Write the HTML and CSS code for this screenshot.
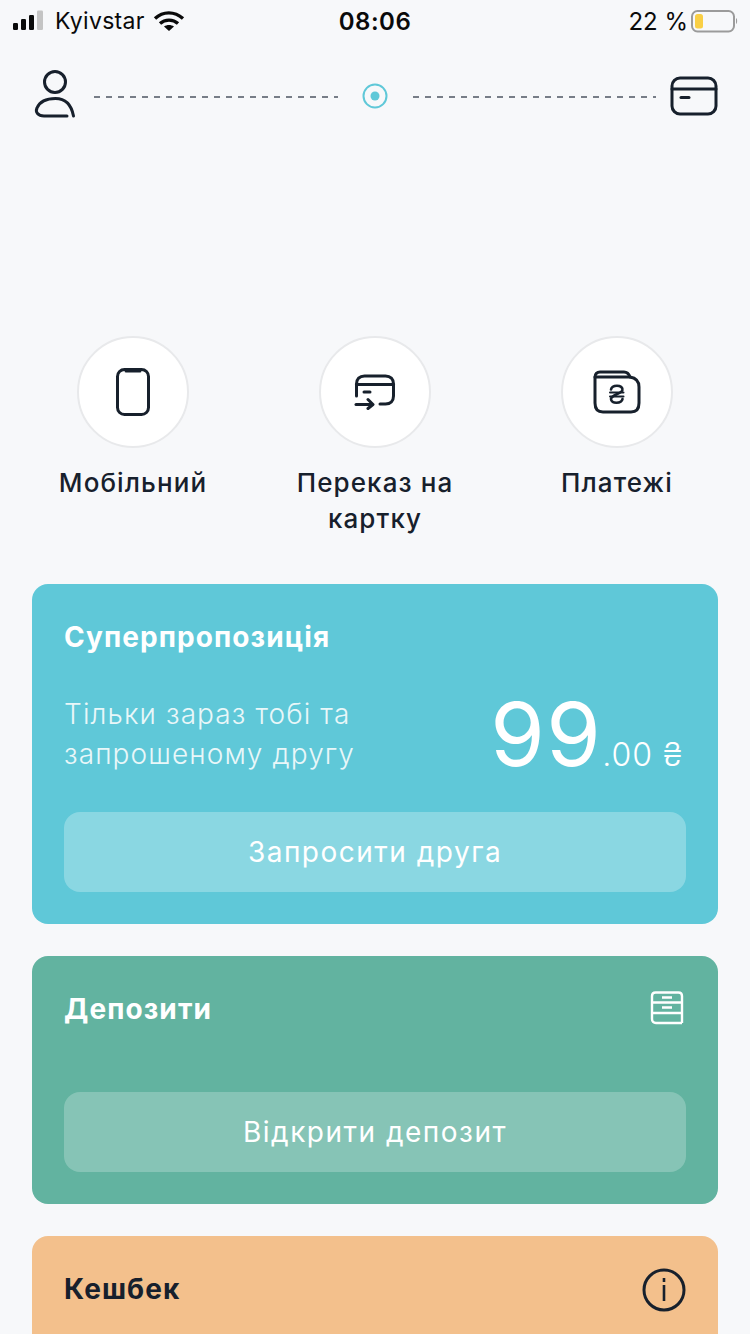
FILE: index.html
```html
<!DOCTYPE html>
<html lang="uk">
<head>
<meta charset="utf-8">
<title>Головна</title>
<link rel="stylesheet" href="styles.css">
</head>
<body>
<div class="page">
  <header class="status">
    <div class="status-left">
      <svg class="signal" width="34" height="24" viewBox="0 0 34 24"><rect x="1" y="14" width="5" height="7" rx="1.2" fill="#0a0a0a"/><rect x="9" y="10" width="5" height="11" rx="1.2" fill="#0a0a0a"/><rect x="17" y="6" width="5" height="15" rx="1.2" fill="#0a0a0a"/><rect x="25" y="1.500" width="6" height="19.500" rx="1.2" fill="#c4c4c4"/></svg>
      <span class="carrier">Kyivstar</span>
      <svg class="wifi" width="32" height="24" viewBox="0 0 32 24" fill="none" stroke="#0a0a0a" stroke-width="3.400"><path d="M2 9.500C10 2 21.500 2 30 9.500"/><path d="M7 14.500C12 10 20 10 25 14.500"/><path d="M16 22l-5-4.500c3-2 7-2 10 0z" fill="#0a0a0a" stroke="none"/></svg>
    </div>
    <div class="clock">08:06</div>
    <div class="status-right">
      <span class="pct">22 %</span>
      <svg width="48" height="26" viewBox="0 0 48 26" fill="none"><rect x="2" y="3" width="42" height="20.500" rx="5.500" stroke="#9b9b9b" stroke-width="2"/><rect x="5" y="6" width="8" height="14.500" rx="2.500" fill="#f9cf45"/><path d="M46 10c1.500.5 1.500 5.500 0 6z" fill="#9b9b9b"/></svg>
    </div>
  </header>

  <nav class="stepper">
    <svg class="step-icon" width="48" height="52" viewBox="0 0 48 52" fill="none" stroke="#17202c" stroke-width="3" stroke-linecap="round"><circle cx="23" cy="12" r="10.500"/><path d="M35 46H12C6 46 3 42 5 38C8 31 15 28.500 23.500 28.500S39 33 41.500 46"/></svg>
    <div class="dash"></div>
    <svg class="step-dot" width="26" height="26" viewBox="0 0 26 26" fill="none"><circle cx="13" cy="13" r="11.500" stroke="#5fc8d8" stroke-width="2"/><circle cx="13" cy="13" r="4.500" fill="#5fc8d8"/></svg>
    <div class="dash"></div>
    <svg class="step-icon" width="48" height="40" viewBox="0 0 48 40" fill="none" stroke="#17202c" stroke-width="3" stroke-linecap="round"><rect x="2" y="2" width="44" height="36" rx="8"/><path d="M2 13h44"/><path d="M11 21.500h8"/></svg>
  </nav>

  <section class="actions">
    <div class="action">
      <div class="circle">
        <svg width="34" height="48" viewBox="0 0 34 48" fill="none" stroke="#17202c" stroke-width="3" stroke-linecap="round"><rect x="1.500" y="1.500" width="31" height="45" rx="7"/><path d="M10 3h14"/></svg>
      </div>
      <div class="action-label">Мобільний</div>
    </div>
    <div class="action">
      <div class="circle">
        <svg width="42" height="36" viewBox="0 0 42 36" fill="none" stroke="#17202c" stroke-width="3" stroke-linecap="round" stroke-linejoin="round"><path d="M2.500 22V10C2.500 5 5.500 2 10.500 2h21c5 0 8 3 8 8v12c0 5-3 8-8 8H26"/><path d="M2.500 10.500h37"/><path d="M10 18h6"/><path d="M2 30.500h16"/><path d="M14 25.500l5 5-5 4"/></svg>
      </div>
      <div class="action-label">Переказ на картку</div>
    </div>
    <div class="action">
      <div class="circle">
        <svg width="48" height="44" viewBox="0 0 48 44" fill="none" stroke="#17202c" stroke-width="3" stroke-linecap="round" stroke-linejoin="round"><path d="M2 7V33c0 6 3 9 8 9h28c5 0 8-3 8-9V17c0-6-3-9-9-10H2"/><path d="M2 7c0-3 2-5 5-5h24c3 0 5 2 6 5"/><path d="M18 19.500c1-5 11-5 11.500 0 .5 4-11 5-11.500 9.500 0 5 10.500 5 11.500 0" stroke-width="2.600"/><path d="M17 22.500h13.500M17 26.500h13.500" stroke-width="2"/></svg>
      </div>
      <div class="action-label">Платежі</div>
    </div>
  </section>

  <section class="card card-blue">
    <h2 class="card-title">Суперпропозиція</h2>
    <div class="offer">
      <p class="offer-text">Тільки зараз тобі та запрошеному другу</p>
      <div class="price"><span class="price-main">99</span><span class="price-rest">.00 ₴</span></div>
    </div>
    <div class="btn">Запросити друга</div>
  </section>

  <section class="card card-green">
    <div class="card-head">
      <h2 class="card-title">Депозити</h2>
      <svg class="head-icon" width="34" height="34" viewBox="0 0 34 34" fill="none" stroke="#fff" stroke-width="2.400"><path d="M32 32H6c-2.500 0-4-1.500-4-4V5c0-2 1.500-3.500 3.500-3.500h23C30.500 1.500 32 3 32 5v27"/><path d="M2 11.500h30M2 22h30"/><path d="M12 6.500h10M12 16.500h10"/></svg>
    </div>
    <div class="btn btn-low">Відкрити депозит</div>
  </section>

  <section class="card card-orange">
    <div class="card-head">
      <h2 class="card-title">Кешбек</h2>
      <svg width="44" height="44" viewBox="0 0 44 44" fill="none" stroke="#17202c" stroke-width="3"><circle cx="22" cy="22" r="20"/><path d="M22 17v16" stroke-width="2.600"/><path d="M22 10v4" stroke-width="2.600"/></svg>
    </div>
  </section>
</div>
</body>
</html>
```
FILE: styles.css
```css
* { box-sizing: border-box; }
html, body { margin: 0; padding: 0; }
body {
  width: 750px;
  height: 1334px;
  overflow: hidden;
  background: #f7f8fa;
  font-family: Inter, "Noto Sans", sans-serif;
  color: #17202c;
}
.page { display: flex; flex-direction: column; height: 1334px; overflow: hidden; }

.status {
  flex: none;
  height: 40px;
  display: grid;
  grid-template-columns: 1fr auto 1fr;
  align-items: center;
  padding: 2px 12px 0;
  color: #0a0a0a;
  font-size: 24px;
}
.status-left { display: flex; align-items: center; gap: 8px; }
.signal { margin-right: 1px; }
.carrier { font-size: 23px; letter-spacing: 0.3px; }
.clock { font-weight: 600; font-size: 24px; letter-spacing: 0.5px; }
.status-right { display: flex; justify-content: flex-end; align-items: center; gap: 2px; }

.stepper {
  flex: none;
  height: 112px;
  padding: 0 32px;
  display: flex;
  align-items: center;
  gap: 14px;
  margin-bottom: 184px;
}
.step-icon { flex: none; }
.step-dot { flex: none; margin: 0 11px 0 10px; }
.dash {
  flex: 1;
  height: 2px;
  margin-top: 2px;
  background: repeating-linear-gradient(to right, #777d87 0 6px, transparent 6px 12px);
}

.actions {
  flex: none;
  display: grid;
  grid-template-columns: repeat(3, 242px);
  padding: 0 12px;
  height: 248px;
}
.action { display: flex; flex-direction: column; align-items: center; }
.circle {
  width: 112px;
  height: 112px;
  border-radius: 50%;
  background: #fff;
  border: 2px solid #e8e9eb;
  display: flex;
  align-items: center;
  justify-content: center;
  margin-bottom: 17px;
}
.action-label {
  width: 200px;
  text-align: center;
  font-size: 26px;
  line-height: 36px;
  letter-spacing: 1.1px;
  font-weight: 500;
  color: #17202c;
}

.card {
  margin: 0 32px 32px;
  padding: 32px;
  border-radius: 16px;
  flex: none;
}
.card-title {
  margin: -1px 0 1px;
  font-size: 28px;
  line-height: 44px;
  font-weight: 700;
  letter-spacing: 1.1px;
}
.card-head { display: flex; justify-content: space-between; align-items: center; height: 44px; }
.head-icon { margin-right: 2px; margin-top: -4px; }

.card-blue { background: #5fc8d8; color: #fff; height: 340px; }
.card-green { background: #62b3a0; color: #fff; height: 248px; }
.card-orange { background: #f3c08c; color: #17202c; height: 200px; }

.offer { display: flex; justify-content: space-between; align-items: flex-end; height: 120px; margin-top: 17px; margin-bottom: 16px; }
.offer-text {
  margin: 0 0 22px;
  width: 320px;
  font-size: 28px;
  line-height: 40px;
  letter-spacing: 1.1px;
  font-weight: 300;
  color: #e9f7f9;
}
.price { display: flex; align-items: baseline; white-space: nowrap; margin: 0 3px 14px 0; }
.price-main { font-size: 88px; line-height: 96px; letter-spacing: 1.5px; font-weight: 400; }
.price-rest { font-size: 32px; font-weight: 300; letter-spacing: 1px; }

.btn {
  height: 80px;
  border-radius: 16px;
  background: rgba(255, 255, 255, 0.27);
  display: flex;
  align-items: center;
  justify-content: center;
  font-size: 28px;
  letter-spacing: 1.5px;
  color: #fff;
}
.btn-low { margin-top: 60px; background: rgba(255, 255, 255, 0.23); }
```
